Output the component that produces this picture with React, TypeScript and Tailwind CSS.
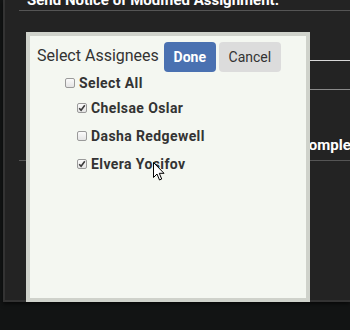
import React from "react";

function Box({ checked }: { checked?: boolean }) {
  return (
    <span className="w-[10px] h-[10px] rounded-[2px] border border-[#9a9a9a] bg-gradient-to-b from-[#fbfbfb] to-[#e4e4e4] flex items-center justify-center shrink-0">
      {checked && (
        <svg width="8" height="8" viewBox="0 0 8 8">
          <path d="M1.2 4.2 L3.1 6.3 L6.8 1.3" fill="none" stroke="#3a3a3a" strokeWidth="1.6" />
        </svg>
      )}
    </span>
  );
}

function Row({ label, checked, indent }: { label: string; checked?: boolean; indent: string }) {
  return (
    <div className={`flex items-center gap-[4px] ${indent}`}>
      <Box checked={checked} />
      <span className="text-[14px] font-bold text-[#333] leading-[16px] tracking-[0.4px]">{label}</span>
    </div>
  );
}

export default function App() {
  return (
    <div
      className="relative w-[350px] h-[330px] overflow-hidden bg-[#121414]"
      style={{ fontFamily: "Roboto, 'Liberation Sans', sans-serif" }}
    >
      <div className="ml-[3px] h-[302px] bg-[#232323] border-l-2 border-b-2 border-[#333] shadow-[0_2px_4px_rgba(0,0,0,0.6)] flex flex-col">
        <div className="pl-[22px] -mt-[10px] h-[20px] text-[15px] font-bold text-white leading-[20px] whitespace-nowrap">
          Send Notice of Modified Assignment.
        </div>
        <div className="ml-[14px] h-px bg-[#555]" />
        <div className="h-[49px]" />
        <div className="ml-[305px] h-px bg-[#d8d8d8]" />
        <div className="h-[28px]" />
        <div className="ml-[305px] h-px bg-[#8a8a8a]" />
        <div className="h-[46px]" />
        <div className="pl-[294px] text-[15px] font-bold text-white leading-[18px] whitespace-nowrap">
          Complete
        </div>
        <div className="h-[6px]" />
        <div className="ml-[14px] h-px bg-[#555]" />
      </div>

      <div className="absolute left-[26px] top-[32px] w-[284px] h-[270px] border-4 border-[#cfd2cb] bg-[#f4f7f1] flex flex-col">
        <div className="flex items-start pt-[6px] pl-[7px]">
          <span className="text-[16px] text-[#333] leading-[20px] mt-[4px] whitespace-nowrap">Select Assignees</span>
          <button className="ml-[5px] w-[52px] h-[30px] rounded-[4px] bg-[#4a71b1] text-white text-[14px] font-bold">
            Done
          </button>
          <button className="ml-[3px] w-[62px] h-[30px] rounded-[4px] bg-[#dcdcdc] text-[#333] text-[14px]">
            Cancel
          </button>
        </div>
        <div className="mt-[3px] flex flex-col">
          <Row label="Select All" indent="pl-[35px]" />
          <div className="h-[9px]" />
          <Row label="Chelsae Oslar" checked indent="pl-[47px]" />
          <div className="h-[12px]" />
          <Row label="Dasha Redgewell" indent="pl-[47px]" />
          <div className="h-[12px]" />
          <Row label="Elvera Yosifov" checked indent="pl-[47px]" />
        </div>
      </div>

      <svg className="absolute left-[153px] top-[162px]" width="13" height="20" viewBox="0 0 13 20">
        <path d="M0.5 0.5 L0.5 15.5 L4 12 L6.5 18 L8.7 17 L6.3 11.3 L11 11.3 Z" fill="#fff" stroke="#000" strokeWidth="1" strokeLinejoin="round" />
      </svg>
    </div>
  );
}
